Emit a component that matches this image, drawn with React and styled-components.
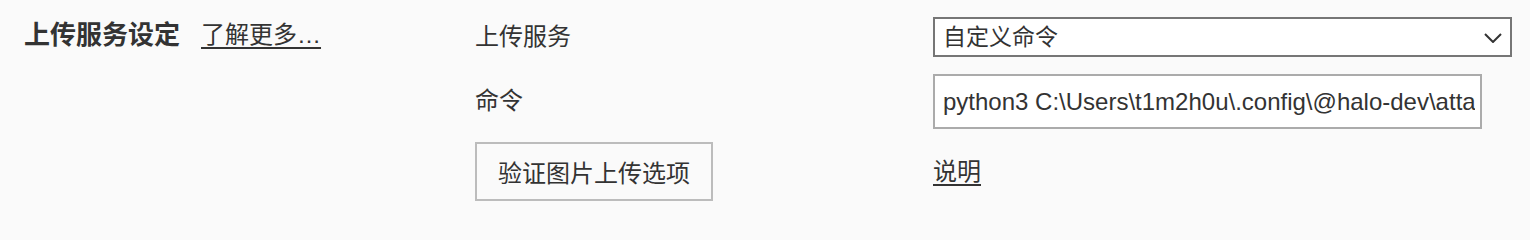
import React from 'react';
import styled, { createGlobalStyle } from 'styled-components';

const GlobalStyle = createGlobalStyle`
  html, body {
    margin: 0;
    padding: 0;
    background: #fafafa;
    overflow: hidden;
  }
  body {
    font-family: "Liberation Sans", "Noto Sans CJK SC", sans-serif;
    color: #333;
  }
`;

const cjk = `"Liberation Sans", "Noto Sans CJK SC", sans-serif`;

const Section = styled.section`
  display: grid;
  grid-template-columns: 451px 458px 579px;
  grid-template-rows: 40px 59px 59px;
  row-gap: 13px;
  padding: 17px 0 0 24px;
  box-sizing: border-box;
  width: 1530px;
  height: 224px;
`;

const Header = styled.div`
  grid-column: 1;
  grid-row: 1;
  display: flex;
  align-items: center;
  gap: 21px;
  margin-top: -4px;
`;

const Title = styled.h2`
  margin: 0;
  font-family: ${cjk};
  font-size: 26px;
  font-weight: 700;
  line-height: 1;
  color: #333;
`;

const Link = styled.a`
  font-family: ${cjk};
  font-size: 24px;
  line-height: 1;
  color: #333;
  text-decoration: underline;
  text-underline-offset: 4px;
  text-decoration-thickness: 1.5px;
  cursor: pointer;
`;

const Label = styled.label`
  grid-column: 2;
  grid-row: ${(p) => p.$row};
  align-self: ${(p) => p.$align || 'center'};
  padding-bottom: ${(p) => p.$pb || 0}px;
  font-family: ${cjk};
  font-size: 24px;
  line-height: 1;
  color: #333;
`;

const Cell = styled.div`
  grid-column: ${(p) => p.$col};
  grid-row: ${(p) => p.$row};
  display: flex;
  align-items: ${(p) => p.$align || 'center'};
`;

const SelectWrap = styled.div`
  position: relative;
  width: 579px;
  height: 40px;
`;

const Select = styled.select`
  appearance: none;
  -webkit-appearance: none;
  width: 100%;
  height: 100%;
  box-sizing: border-box;
  border: 2px solid #767676;
  border-radius: 0;
  background: #fff;
  padding: 0 40px 0 8px;
  font-family: ${cjk};
  font-size: 23px;
  color: #333;
  outline: none;
`;

const Chevron = styled.svg`
  position: absolute;
  right: 10px;
  top: 16px;
  width: 18px;
  height: 10px;
  pointer-events: none;
`;

const TextInput = styled.input`
  width: 549px;
  height: 55px;
  box-sizing: border-box;
  border: 2px solid #ababab;
  border-radius: 0;
  background: #fff;
  padding: 0 5px 0 8px;
  font-family: "Liberation Sans", Arial, sans-serif;
  font-size: 24px;
  color: #333;
  outline: none;
`;

const Button = styled.button`
  width: 238px;
  height: 59px;
  box-sizing: border-box;
  border: 2px solid #bcbcbc;
  border-radius: 0;
  background: #fafafa;
  font-family: ${cjk};
  font-size: 24px;
  color: #333;
  padding: 0;
  cursor: pointer;
`;

export default function App() {
  return (
    <>
      <GlobalStyle />
      <Section>
        <Header>
          <Title>上传服务设定</Title>
          <Link>了解更多…</Link>
        </Header>

        <Label $row={1}>上传服务</Label>
        <Cell $col={3} $row={1}>
          <SelectWrap>
            <Select defaultValue="custom">
              <option value="none">无</option>
              <option value="custom">自定义命令</option>
            </Select>
            <Chevron viewBox="0 0 18 10" fill="none">
              <path d="M1 1 L9 9 L17 1" stroke="#333" strokeWidth="2" />
            </Chevron>
          </SelectWrap>
        </Cell>

        <Label $row={2} $align="end" $pb={16}>命令</Label>
        <Cell $col={3} $row={2} $align="flex-end">
          <TextInput
            defaultValue={'python3 C:\\Users\\t1m2h0u\\.config\\@halo-dev\\attachment\\upload.py'}
          />
        </Cell>

        <Cell $col={2} $row={3}>
          <Button>验证图片上传选项</Button>
        </Cell>
        <Cell $col={3} $row={3}>
          <Link>说明</Link>
        </Cell>
      </Section>
    </>
  );
}
